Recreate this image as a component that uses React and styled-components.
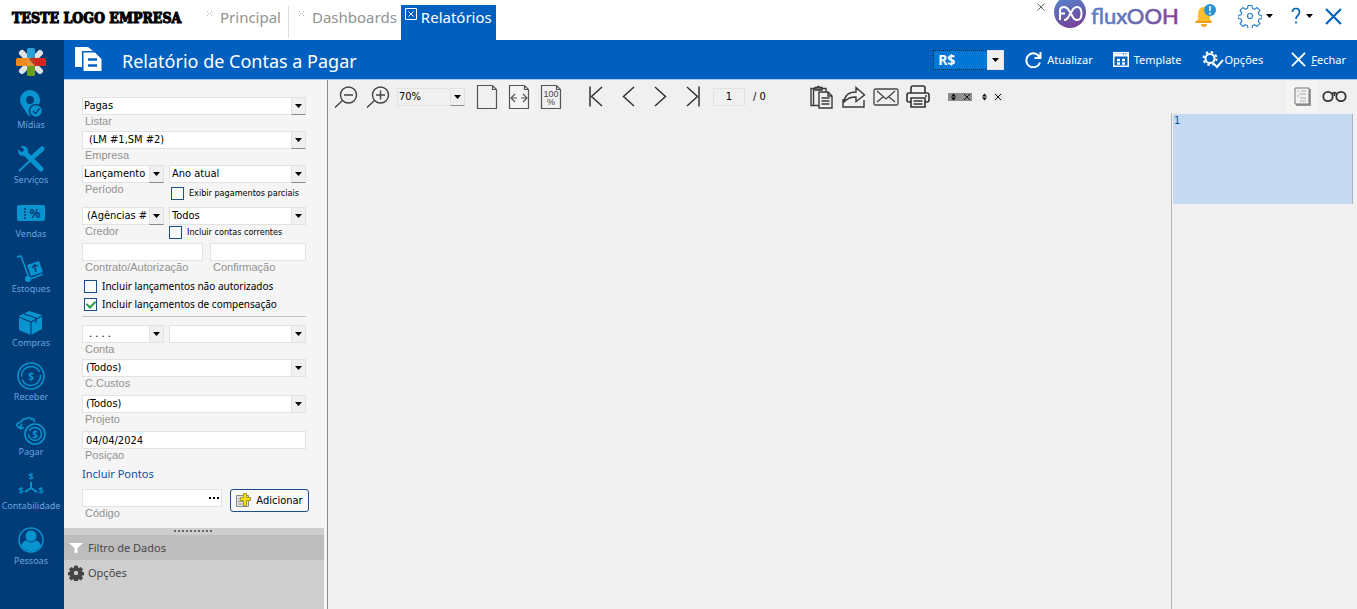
import React, { useState } from 'react';
import styled, { createGlobalStyle } from 'styled-components';

const GlobalStyle = createGlobalStyle`
    * {
        box-sizing: border-box;
    }
    body {
        margin: 0;
        background-color: #fff;
        font-family: 'Noto Sans', 'Open Sans', sans-serif;
    }
    button, input, select {
        font-family: inherit;
    }
    svg {
        display: block;
        flex-shrink: 0;
    }
`;

const formFont = "'DejaVu Sans Condensed', 'DejaVu Sans', Tahoma, sans-serif";

const Page = styled.div`
    min-height: 100vh;
    display: flex;
    flex-direction: column;
`;

const TopBar = styled.header`
    height: 40px;
    display: flex;
    align-items: stretch;
    justify-content: space-between;
    padding: 0 6px 0 12px;
`;

const Company = styled.div`
    width: 185px;
    padding-top: 8px;
    color: #000;
    font-family: 'DejaVu Serif Condensed', 'DejaVu Serif', serif;
    font-weight: 900;
    font-size: 14px;
    line-height: 20px;
    white-space: nowrap;
    -webkit-text-stroke: 1px #000;
`;

const Tabs = styled.nav`
    display: flex;
    align-items: stretch;
`;

const Tab = styled.button`
    display: flex;
    align-items: flex-start;
    gap: ${(props) => (props.$active ? 4 : 7)}px;
    margin: ${(props) => (props.$active ? '5px 0 0' : '6px 0 2px')};
    padding: ${(props) => (props.$active ? '3px 4px' : props.$divider ? '2px 7px 0 10px' : '2px 4px 0 10px')};
    border: 0;
    border-right: ${(props) => (props.$divider ? '1px solid #ddd' : '0')};
    background-color: ${(props) => (props.$active ? '#0060c0' : 'transparent')};
    color: ${(props) => (props.$active ? '#fff' : '#929292')};
    font-size: 15px;
    line-height: 19px;
    cursor: pointer;
`;

const TopTools = styled.div`
    display: flex;
    align-items: flex-start;
`;

const IconButton = styled.button`
    display: flex;
    align-items: center;
    justify-content: center;
    gap: 4px;
    height: ${(props) => props.$height || 32}px;
    width: ${(props) => (props.$width ? `${props.$width}px` : 'auto')};
    padding: 0;
    border: 0;
    background: ${(props) => props.$background || 'transparent'};
    color: ${(props) => props.$color || '#444'};
    cursor: pointer;
`;

const Body = styled.div`
    flex: 1;
    display: flex;
`;

const SideNav = styled.nav`
    width: 64px;
    flex-shrink: 0;
    display: flex;
    flex-direction: column;
    align-items: stretch;
    padding-bottom: 36px;
    background-color: #003c78;
`;

const NavLogo = styled.div`
    height: 43px;
    padding: 8px 0 0 16px;
`;

const NavItem = styled.a`
    flex: 1;
    min-height: 54px;
    display: flex;
    flex-direction: column;
    align-items: center;
    justify-content: center;
    padding-right: 2px;
    color: #6ba3e0;
    font-size: 9px;
    line-height: 12px;
    text-decoration: none;
`;

const Content = styled.div`
    flex: 1;
    min-width: 0;
    display: flex;
    flex-direction: column;
`;

const TitleBar = styled.div`
    height: 40px;
    display: flex;
    align-items: center;
    justify-content: space-between;
    padding: 0 11px;
    background-color: #0060c0;
    border-bottom: 1px solid #a5cdf2;
    color: #fff;
`;

const TitleGroup = styled.div`
    display: flex;
    align-items: center;
    gap: 19px;
`;

const Title = styled.h1`
    margin: 0;
    padding-top: 2px;
    font-size: 18px;
    font-weight: normal;
    line-height: 24px;
`;

const Actions = styled.div`
    display: flex;
    align-items: center;
`;

const Action = styled.button`
    display: flex;
    align-items: center;
    gap: ${(props) => (props.$tight ? 1 : 5)}px;
    margin-left: ${(props) => props.$space || 20}px;
    padding: 0;
    border: 0;
    background: transparent;
    color: #fff;
    font-size: 11px;
    line-height: 16px;
    cursor: pointer;
`;

const Work = styled.div`
    flex: 1;
    display: flex;
`;

const Sidebar = styled.aside`
    width: 264px;
    flex-shrink: 0;
    display: flex;
    flex-direction: column;
    padding-right: 3px;
    background-color: #f5f5f5;
    border-right: 1px solid #8c8c8c;
`;

const Filters = styled.form`
    display: flex;
    flex-direction: column;
    padding: 17px 18px 5px 18px;
`;

const Row = styled.div`
    display: grid;
    grid-template-columns: ${(props) => props.$columns || '1fr'};
    column-gap: ${(props) => props.$gap || 5}px;
    margin-bottom: ${(props) => props.$after || 0}px;
`;

const Field = styled.div`
    min-width: 0;
    display: flex;
    flex-direction: column;
`;

const Label = styled.label`
    padding-left: 3px;
    height: 16px;
    color: #929292;
    font-family: 'Liberation Sans', Arial, sans-serif;
    font-size: 11px;
    line-height: 13px;
    white-space: nowrap;
`;

const SelectBox = styled.div`
    position: relative;
    height: ${(props) => props.$height || 18}px;
    width: ${(props) => (props.$width ? `${props.$width}px` : '100%')};
`;

const Select = styled.select`
    appearance: none;
    display: block;
    width: 100%;
    height: 100%;
    padding: 0 14px 0 ${(props) => props.$indent || 1}px;
    border: 1px ${(props) => (props.$currency ? 'dotted #222' : 'solid #e2e2e2')};
    border-radius: 0;
    outline: none;
    background-color: ${(props) => (props.$currency ? '#0078d7' : props.$flat ? '#f0f0f0' : '#fff')};
    color: ${(props) => (props.$currency ? '#fff' : '#000')};
    font-family: ${(props) => (props.$currency ? "'Noto Sans', sans-serif" : formFont)};
    font-size: ${(props) => (props.$currency ? 14 : 11)}px;
    font-weight: ${(props) => (props.$currency ? 'bold' : 'normal')};
    line-height: 16px;
`;

const Arrow = styled.span`
    position: absolute;
    top: 0;
    right: 0;
    width: ${(props) => (props.$wide ? 17 : 15)}px;
    height: 100%;
    display: flex;
    align-items: center;
    justify-content: center;
    background-color: #f0f0f0;
    border: 1px solid #e2e2e2;
    border-bottom-color: ${(props) => (props.$raised ? '#8a8a8a' : '#e2e2e2')};
    pointer-events: none;
`;

const Input = styled.input`
    display: block;
    width: ${(props) => (props.$width ? `${props.$width}px` : '100%')};
    height: 18px;
    padding: 0 3px;
    border: 1px solid #e2e2e2;
    outline: none;
    background-color: ${(props) => (props.$flat ? '#f0f0f0' : '#fff')};
    color: #000;
    font-family: ${formFont};
    font-size: 11px;
    text-align: ${(props) => props.$align || 'left'};
`;

const CheckLabel = styled.label`
    display: flex;
    align-items: center;
    gap: 5px;
    height: ${(props) => props.$height || 18}px;
    padding-left: ${(props) => (props.$flush ? 0 : 2)}px;
    color: #000;
    font-family: ${(props) => (props.$small ? formFont : 'inherit')};
    font-size: ${(props) => (props.$small ? 9 : 10)}px;
    line-height: 14px;
    white-space: nowrap;
`;

const Checkbox = styled.input`
    appearance: none;
    display: flex;
    align-items: center;
    justify-content: center;
    flex-shrink: 0;
    width: 13px;
    height: 13px;
    margin: 0;
    border: 1px solid #1c4f87;
    background-color: #fafafa;
    &:checked::after {
        content: '';
        width: 4px;
        height: 7px;
        margin-bottom: 2px;
        border: solid #23a045;
        border-width: 0 2px 2px 0;
        transform: rotate(45deg);
    }
`;

const Divider = styled.hr`
    width: 100%;
    margin: 3px 0 8px;
    border: 0;
    border-top: 1px solid #c2c2c2;
`;

const PointsLink = styled.a`
    height: 24px;
    color: #0b4f9e;
    font-size: 11px;
    line-height: 18px;
    text-decoration: none;
`;

const CodeBox = styled.div`
    display: flex;
    height: 18px;
    background-color: #fff;
    border: 1px solid #e2e2e2;
`;

const CodeInput = styled.input`
    flex: 1;
    min-width: 0;
    padding: 0 3px;
    border: 0;
    outline: none;
    font-size: 10px;
`;

const AddButton = styled.button`
    height: 23px;
    display: flex;
    align-items: center;
    justify-content: center;
    gap: 4px;
    margin-right: -3px;
    padding: 0;
    border: 1px solid #1c4f87;
    border-radius: 3px;
    background-color: #f8f8f8;
    color: #000;
    font-family: ${formFont};
    font-size: 11px;
    white-space: nowrap;
`;

const Drawer = styled.div`
    flex: 1;
    display: flex;
    flex-direction: column;
    background-color: #cecece;
`;

const Grip = styled.div`
    height: 7px;
    display: flex;
    justify-content: center;
    padding-top: 2px;
`;

const DrawerItem = styled.button`
    display: flex;
    align-items: center;
    gap: 4px;
    height: 25px;
    padding: 0 4px;
    border: 0;
    background-color: ${(props) => (props.$active ? '#bdbdbd' : 'transparent')};
    color: #484848;
    font-size: 11px;
    text-align: left;
`;

const Report = styled.main`
    flex: 1;
    min-width: 0;
    display: flex;
    flex-direction: column;
    background-color: #f0f0f0;
`;

const Toolbar = styled.div`
    height: 33px;
    display: flex;
    align-items: center;
    justify-content: space-between;
    padding: 0 7px 0 2px;
`;

const ToolGroup = styled.div`
    display: flex;
    align-items: center;
    margin-left: ${(props) => props.$space || 0}px;
`;

const PageCount = styled.span`
    padding-left: 8px;
    color: #000;
    font-family: ${formFont};
    font-size: 11px;
`;

const ReportBody = styled.div`
    flex: 1;
    display: flex;
    justify-content: flex-end;
`;

const Thumbs = styled.div`
    width: 186px;
    padding: 1px 4px 0 1px;
    border-left: 1px solid #b5b5b5;
`;

const Thumb = styled.button`
    display: flex;
    align-items: flex-start;
    width: 100%;
    height: 90px;
    padding: 0 1px;
    border: 0;
    border-right: 1px solid #a8b4c4;
    background-color: #c5daf2;
    color: #0b4f9e;
    font-family: ${formFont};
    font-size: 11px;
    line-height: 14px;
`;

const Caret = ({ color = '#000' }) => (
    <svg width="7" height="4" viewBox="0 0 7 4" fill={color}>
        <path d="M0 0H7L3.5 4Z" />
    </svg>
);

const Dots = () => (
    <svg width="6" height="9" viewBox="0 0 6 9" fill="#bbb">
        <path d="M0 3h1v1H0zM4 3h1v1H4zM1 5h1v1H1zM3 5h1v1H3zM0 7h1v1H0zM4 7h1v1H4z" />
    </svg>
);

const Cross = ({ size = 16, width = 2 }) => (
    <svg width={size} height={size} viewBox="0 0 16 16" fill="none" stroke="currentColor" strokeWidth={width}>
        <path d="M1 1L15 15M15 1L1 15" />
    </svg>
);

const StarLogo = () => (
    <svg width="30" height="28" viewBox="0 0 30 28">
        <path d="M6 5L24 23M24 5L6 23" stroke="#dfe3e8" strokeWidth="6" strokeLinecap="round" />
        <rect x="11" y="0" width="8" height="14" rx="1.500" fill="#2b9fd8" />
        <rect x="0" y="10" width="15" height="8" rx="1.500" fill="#f08a1d" />
        <rect x="14" y="10" width="16" height="8" rx="1.500" fill="#d0281e" />
        <rect x="11" y="14" width="8" height="14" rx="1.500" fill="#6a9e1c" />
        <path d="M11 9v5h4z" fill="#f08a1d" />
        <path d="M11 9l8 9h-8z" fill="#e09a3a" />
        <path d="M19 9v9l-6-7z" fill="#c03a2a" />
    </svg>
);

const FluxLogo = () => (
    <svg width="133" height="32" viewBox="0 0 133 32">
        <defs>
            <linearGradient id="flux" x1="0" x2="1">
                <stop offset="0" stopColor="#5b83cc" />
                <stop offset="0.600" stopColor="#6a68ae" />
                <stop offset="1" stopColor="#8a3c94" />
            </linearGradient>
            <linearGradient id="disc" x1="0" y1="0" x2="0.300" y2="1">
                <stop offset="0" stopColor="#5189cf" />
                <stop offset="1" stopColor="#74479c" />
            </linearGradient>
        </defs>
        <circle cx="16" cy="12" r="16" fill="url(#disc)" />
        <g fill="none" stroke="#fff" strokeWidth="2">
            <path d="M6 20V11q0-4 4-4 3 0 5 3.500l3 5q2 4.500 5 4.500 4.500 0 4.500-6.500T23 7q-3 0-5 4l-3 5q-2 4-5 4M6 13.500h5" />
        </g>
        <text x="37" y="24" fill="url(#flux)" stroke="url(#flux)" strokeWidth="0.600" fontFamily="Lato, sans-serif" fontSize="22">
            fluxOOH
        </text>
    </svg>
);

const Bell = () => (
    <svg width="22" height="24" viewBox="0 0 22 24">
        <path d="M9 3q-5 1-5 7v5l-3 4h17l-2-4v-5q0-6-5-7z" fill="#fdbf2d" />
        <path d="M1 19h17l-1-2H2z" fill="#ee9c1d" />
        <path d="M7 20h6q0 3-3 3t-3-3z" fill="#f5a623" />
        <circle cx="16" cy="6" r="6" fill="#2a94d0" />
        <path d="M16 2v5M16 8.500v2" stroke="#fff" strokeWidth="1.500" />
    </svg>
);

const GearShape = ({ size = 22, stroke, fill = 'none', hole = 'none', width = 1.5, holeSize = 3 }) => (
    <svg width={size} height={size} viewBox="0 0 24 24" fill={fill} stroke={stroke} strokeWidth={width} strokeLinejoin="round">
        <path d="M10 1.500h4l.6 3 2 .8 2.500-1.700 2.800 2.800-1.700 2.500.8 2 3 .6v3l-3 .6-.8 2 1.700 2.500-2.800 2.800-2.500-1.700-2 .8-.6 3h-4l-.6-3-2-.8-2.500 1.700-2.800-2.800 1.700-2.500-.8-2-3-.6v-3l3-.6.8-2-1.700-2.500 2.800-2.800 2.500 1.700 2-.8z" />
        <circle cx="12" cy="12" r={holeSize} fill={hole} />
    </svg>
);

const ReportIcon = () => (
    <svg width="28" height="26" viewBox="0 0 28 26">
        <path d="M0 0H13L18 4H7V20H0Z" fill="#fff" />
        <path d="M8 5H20L27 12V24.500H8Z" fill="#fff" stroke="#0060c0" strokeWidth="1" />
        <path d="M13 12.500h9M13 18.500h9" stroke="#0060c0" strokeWidth="2.500" />
    </svg>
);

const RefreshIcon = () => (
    <svg width="17" height="16" viewBox="0 0 17 16" fill="none" stroke="#fff" strokeWidth="2">
        <path d="M14.500 5A7 7 0 1 0 15 10.500M15.500 0v6h-6" />
    </svg>
);

const TemplateIcon = () => (
    <svg width="16" height="15" viewBox="0 0 16 15" fill="none" stroke="#fff">
        <path d="M.75.75h14.500v13.500H.75z" strokeWidth="1.500" />
        <path d="M1 3h14" strokeWidth="3" />
        <path d="M10 2h1M12.500 2h1" stroke="#0060c0" />
        <path d="M4 8h3M4 11.500h3M9 8h3M9 11.500h3" strokeWidth="2.500" />
    </svg>
);

const OptionsIcon = () => (
    <svg width="22" height="18" viewBox="0 0 22 18" fill="none" stroke="#fff">
        <circle cx="8" cy="7.500" r="4.500" strokeWidth="2" />
        <circle cx="8" cy="7.500" r="6.500" strokeWidth="2" strokeDasharray="2.500 2.600" />
        <path d="M12 13l3 3 6-7" strokeWidth="2" />
    </svg>
);

const ZoomIcon = ({ plus }) => (
    <svg width="24" height="22" viewBox="0 0 24 22" fill="none" stroke="#444" strokeWidth="1.400">
        <circle cx="14.500" cy="9" r="8" />
        <path d="M8.500 14.500L1 21.500M10 9h9" />
        {plus && <path d="M14.500 4.500v9" />}
    </svg>
);

const SheetIcon = ({ children }) => (
    <svg width="22" height="26" viewBox="0 0 22 26" fill="none" stroke="#555" strokeWidth="1.200">
        <path d="M1.500 1.500h15l4 4v19h-19zM16.500 1.500v4h4" />
        {children}
    </svg>
);

const Chevron = ({ flip, bar }) => (
    <svg width="17" height="21" viewBox="0 0 17 21" fill="none" stroke="#333" strokeWidth="1.500">
        {flip ? <path d="M3 1l10.500 9.500L3 20" /> : <path d="M14 1L3.500 10.500 14 20" />}
        {bar && <path d={flip ? 'M15 .5v20' : 'M2 .5v20'} />}
    </svg>
);

const PasteIcon = () => (
    <svg width="24" height="24" viewBox="0 0 24 24" fill="#f0f0f0" stroke="#3a3a3a" strokeWidth="1.400">
        <path d="M1 3.500h15v17H1z" />
        <path d="M3.500 4v16" />
        <path d="M5 5V2.500h2q1-2 3 0h2V5z" fill="#777" />
        <path d="M9 7h9l4 4v12H9zM18 7v4h4" />
        <path d="M11.500 13h8M11.500 16h8M11.500 19h8" />
    </svg>
);

const ShareIcon = () => (
    <svg width="24" height="22" viewBox="0 0 24 22" fill="none" stroke="#3a3a3a" strokeWidth="1.400">
        <path d="M1 13v8h21v-7M2 16q1-10 12-10V1.500L22.500 9 14 15.500V11Q6 11 2 16z" />
    </svg>
);

const MailIcon = () => (
    <svg width="26" height="18" viewBox="0 0 26 18" fill="none" stroke="#444" strokeWidth="1.300">
        <rect x="1" y="1" width="24" height="16" rx="1.500" />
        <path d="M4 3l9 8 9-8M4 14l6-5M22 14l-6-5" />
    </svg>
);

const PrintIcon = () => (
    <svg width="24" height="23" viewBox="0 0 24 23" fill="none" stroke="#333" strokeWidth="1.600">
        <path d="M5 8V3q0-2 2-2h10q2 0 2 2v5M5 17H3q-2 0-2-2v-5q0-2 2-2h18q2 0 2 2v5q0 2-2 2h-2" />
        <path d="M5 13h14v9H5zM7.500 16h9M7.500 19h9M19 11h2" />
    </svg>
);

const SplitClose = ({ dark }) => (
    <svg width="24" height="8" viewBox="0 0 24 8">
        {dark ? <path d="M0 0h24v8H0z" fill="#8f8f8f" /> : <path d="M14 0h10v8H14z" fill="#e4e4e4" />}
        <path d="M3 3.500L5.500.5 8 3.500zM3 4.500h5L5.500 7.500z" />
        <path d="M16 1l6 6M22 1l-6 6" stroke="#111" />
    </svg>
);

const OutlineIcon = () => (
    <svg width="17" height="20" viewBox="0 0 17 20" fill="none">
        <path d="M2 2h15v17H2z" fill="#999" />
        <path d="M1 1h14v16H1z" fill="#f2f2f2" stroke="#777" />
        <path d="M3 4h2M7 4h5M5 7h7M3 9h2M6 11h6M6 14h6" stroke="#aaa" />
    </svg>
);

const GlassesIcon = () => (
    <svg width="25" height="13" viewBox="0 0 25 13" fill="none" stroke="#333" strokeWidth="1.800">
        <circle cx="6" cy="6.500" r="4.700" />
        <circle cx="19" cy="6.500" r="4.700" />
        <path d="M10 4q2.500-3 5 0M12.500 2v4" strokeWidth="1.500" />
    </svg>
);

const AddIcon = () => (
    <svg width="16" height="15" viewBox="0 0 16 15">
        <path d="M.5 2.500h12v11H.5z" fill="#e3e3e3" stroke="#888" />
        <path d="M2 6h5M2 8.500h5M2 11h7" stroke="#999" />
        <path d="M7.500.5h3v4h4v3h-4v5h-3v-5h-3v-3h3z" fill="#f7e21b" stroke="#a39a18" />
    </svg>
);

const blue = '#0895cf';
const navy = '#003c78';

const Coin = ({ x, y, r }) => (
    <g fill="none" stroke={blue}>
        <circle cx={x} cy={y} r={r} strokeWidth="1.600" />
        <circle cx={x} cy={y} r={r - 3.5} strokeWidth="1.400" strokeDasharray={`${r * 2} 3`} />
        <text x={x} y={y + 4} fill={blue} stroke="none" fontSize="10" fontWeight="bold" textAnchor="middle">$</text>
    </g>
);

const modules = [
    {
        name: 'Mídias',
        icon: (
            <>
                <path d="M14 1a10 10 0 0 1 10 10c0 3-1 4-2 6l-6 9q-2 2-4 0L6 17c-1-2-2-3-2-6A10 10 0 0 1 14 1z" fill={blue} />
                <circle cx="14" cy="11" r="4" fill={navy} />
                <circle cx="20" cy="22" r="6.500" fill={blue} stroke={navy} strokeWidth="1.500" />
                <path d="M17 22l2.500 2.500 4-5" fill="none" stroke={navy} strokeWidth="1.500" />
            </>
        )
    },
    {
        name: 'Serviços',
        icon: (
            <>
                <path d="M9 9L25 25" stroke={blue} strokeWidth="5" strokeLinecap="round" />
                <circle cx="7" cy="7" r="5" fill={blue} />
                <path d="M1 2l6 5" stroke={navy} strokeWidth="4" />
                <path d="M3 27L17 14" stroke={blue} strokeWidth="2" />
                <path d="M17 13L26 5" stroke={navy} strokeWidth="7" />
                <path d="M17 13L26 5" stroke={blue} strokeWidth="5" strokeLinecap="round" />
            </>
        )
    },
    {
        name: 'Vendas',
        icon: (
            <>
                <rect x="1" y="7" width="28" height="16" rx="2" fill={blue} />
                <path d="M9 10v11" stroke={navy} strokeWidth="1.500" strokeDasharray="2 1" />
                <text x="19" y="20" fontSize="12" fontWeight="bold" textAnchor="middle" fill={navy}>%</text>
            </>
        )
    },
    {
        name: 'Estoques',
        icon: (
            <>
                <path d="M1 4l4-1 8 22M14 26l13-5" fill="none" stroke={blue} strokeWidth="1.500" />
                <circle cx="12" cy="26" r="3" fill={blue} />
                <path d="M11 12l12-4 4 11-12 4z" fill={blue} />
                <path d="M20 19l-1.500-6M16 15l2.500-3 3.500 1" fill="none" stroke={navy} strokeWidth="1.500" />
            </>
        )
    },
    {
        name: 'Compras',
        icon: (
            <>
                <path d="M3 9l10-5 13 4v14l-11 6-12-5z" fill={blue} />
                <path d="M3 10l12 5 11-6M15 15v13M8 7l12 4v5" fill="none" stroke={navy} strokeWidth="1.200" />
            </>
        )
    },
    { name: 'Receber', icon: <Coin x={15} y={15} r={13} /> },
    {
        name: 'Pagar',
        icon: (
            <>
                <path d="M6 13q-6-2-5-5l5-3q1-3 4-2 3-3 5 0 4-1 3 3M6 8l-2 3 4 1" fill="none" stroke={blue} strokeWidth="1.600" />
                <Coin x={19} y={18} r={10} />
            </>
        )
    },
    {
        name: 'Contabilidade',
        icon: (
            <>
                <path d="M15 12v6l-6 4M15 18l6 4" fill="none" stroke={blue} strokeWidth="2" />
                <g fill={blue} fontSize="9" fontWeight="bold" textAnchor="middle">
                    <text x="15" y="10">$</text>
                    <text x="5" y="24">$</text>
                    <text x="25" y="24">$</text>
                </g>
            </>
        )
    },
    {
        name: 'Pessoas',
        icon: (
            <>
                <circle cx="15" cy="15" r="12" fill="none" stroke={blue} strokeWidth="1.500" />
                <path d="M5 21q2-6 7-6h6q5 0 7 6-4 5-10 5T5 21z" fill={blue} />
                <circle cx="15" cy="11" r="6" fill={blue} stroke={navy} />
            </>
        )
    }
];

const Dropdown = ({ id, label, value, indent, raised, flat, currency, height, width }) => (
    <SelectBox $height={height} $width={width}>
        <Select id={id} aria-label={label} $indent={indent} $flat={flat} $currency={currency}>
            <option>{value}</option>
        </Select>
        <Arrow $raised={raised} $wide={currency}>
            <Caret />
        </Arrow>
    </SelectBox>
);

const Check = ({ text, height, small, flush, defaultChecked }) => (
    <CheckLabel $height={height} $small={small} $flush={flush}>
        <Checkbox type="checkbox" defaultChecked={defaultChecked} />
        {text}
    </CheckLabel>
);

const FilterForm = () => {
    const [position, setPosition] = useState('04/04/2024');

    return (
        <Filters onSubmit={(e) => e.preventDefault()}>
            <Field>
                <Dropdown id="listar" value="Pagas" raised />
                <Label htmlFor="listar">Listar</Label>
            </Field>
            <Field>
                <Dropdown id="empresa" value="(LM #1,SM #2)" indent={6} raised />
                <Label htmlFor="empresa">Empresa</Label>
            </Field>
            <Row $columns="82px 1fr" $after={4}>
                <Field>
                    <Dropdown id="periodo" value="Lançamento" raised />
                    <Label htmlFor="periodo">Período</Label>
                </Field>
                <Field>
                    <Dropdown label="Intervalo" value="Ano atual" indent={2} raised />
                    <Check text="Exibir pagamentos parciais" height={20} small />
                </Field>
            </Row>
            <Row $columns="82px 1fr" $after={2}>
                <Field>
                    <Dropdown id="credor" value="(Agências #" indent={4} raised />
                    <Label htmlFor="credor">Credor</Label>
                </Field>
                <Field>
                    <Dropdown label="Nome do credor" value="Todos" indent={2} />
                    <Check text="Incluir contas correntes" height={14} small flush />
                </Field>
            </Row>
            <Row $columns="121px 1fr" $gap={7}>
                <Field>
                    <Input id="contrato" />
                    <Label htmlFor="contrato">Contrato/Autorização</Label>
                </Field>
                <Field>
                    <Input id="confirmacao" />
                    <Label htmlFor="confirmacao">Confirmação</Label>
                </Field>
            </Row>
            <Check text="Incluir lançamentos não autorizados" />
            <Check text="Incluir lançamentos de compensação" defaultChecked />
            <Divider />
            <Row $columns="82px 1fr">
                <Field>
                    <Dropdown id="conta" value=". .  .  ." indent={6} />
                    <Label htmlFor="conta">Conta</Label>
                </Field>
                <Dropdown label="Nome da conta" value="" />
            </Row>
            <Row $after={2}>
                <Field>
                    <Dropdown id="custos" value="(Todos)" indent={3} />
                    <Label htmlFor="custos">C.Custos</Label>
                </Field>
            </Row>
            <Row $after={2}>
                <Field>
                    <Dropdown id="projeto" value="(Todos)" indent={3} />
                    <Label htmlFor="projeto">Projeto</Label>
                </Field>
            </Row>
            <Field>
                <Input id="posicao" value={position} onChange={(e) => setPosition(e.target.value)} />
                <Label htmlFor="posicao">Posiçao</Label>
            </Field>
            <PointsLink href="#pontos">Incluir Pontos</PointsLink>
            <Row $columns="140px 1fr" $gap={8}>
                <Field>
                    <CodeBox>
                        <CodeInput id="codigo" />
                        <IconButton type="button" aria-label="Buscar código" $width={15} $height={16}>
                            <svg width="10" height="2" viewBox="0 0 10 2">
                                <path d="M0 0h2v2H0zM4 0h2v2H4zM8 0h2v2H8z" />
                            </svg>
                        </IconButton>
                    </CodeBox>
                    <Label htmlFor="codigo">Código</Label>
                </Field>
                <AddButton type="button">
                    <AddIcon />
                    Adicionar
                </AddButton>
            </Row>
        </Filters>
    );
};

const ReportToolbar = () => (
    <Toolbar>
        <ToolGroup>
            <IconButton $width={32} aria-label="Diminuir zoom"><ZoomIcon /></IconButton>
            <IconButton $width={32} aria-label="Aumentar zoom"><ZoomIcon plus /></IconButton>
            <ToolGroup $space={3}>
                <Dropdown label="Zoom" value="70%" width={68} raised flat />
            </ToolGroup>
            <ToolGroup $space={6}>
                <IconButton $width={32} aria-label="Página inteira"><SheetIcon /></IconButton>
                <IconButton $width={32} $background="#f4f4f2" aria-label="Largura da página">
                    <SheetIcon>
                        <path d="M7 10l-4 4 4 4M15 10l4 4-4 4M4 14h5M13 14h5" />
                    </SheetIcon>
                </IconButton>
                <IconButton $width={32} aria-label="Tamanho real">
                    <SheetIcon>
                        <g fill="#444" stroke="none" fontSize="9" fontFamily="Liberation Sans" textAnchor="middle">
                            <text x="11" y="13">100</text>
                            <text x="11" y="21">%</text>
                        </g>
                    </SheetIcon>
                </IconButton>
            </ToolGroup>
            <ToolGroup $space={13}>
                <IconButton $width={32} aria-label="Primeira página"><Chevron bar /></IconButton>
                <IconButton $width={32} aria-label="Página anterior"><Chevron /></IconButton>
                <IconButton $width={32} aria-label="Próxima página"><Chevron flip /></IconButton>
                <IconButton $width={32} aria-label="Última página"><Chevron flip bar /></IconButton>
            </ToolGroup>
            <ToolGroup $space={5}>
                <Input aria-label="Página" defaultValue="1" $width={32} $flat $align="center" />
                <PageCount>/ 0</PageCount>
            </ToolGroup>
            <ToolGroup $space={40}>
                <IconButton $width={32} aria-label="Copiar"><PasteIcon /></IconButton>
                <IconButton $width={32} aria-label="Exportar"><ShareIcon /></IconButton>
                <IconButton $width={32} aria-label="Enviar por e-mail"><MailIcon /></IconButton>
                <IconButton $width={32} aria-label="Imprimir"><PrintIcon /></IconButton>
            </ToolGroup>
            <ToolGroup $space={14}>
                <IconButton $width={24} aria-label="Fechar grupo"><SplitClose dark /></IconButton>
                <IconButton $width={38} aria-label="Fechar seção"><SplitClose /></IconButton>
            </ToolGroup>
        </ToolGroup>
        <ToolGroup>
            <IconButton $width={32} $background="#f4f4f2" aria-label="Miniaturas"><OutlineIcon /></IconButton>
            <IconButton $width={32} aria-label="Localizar"><GlassesIcon /></IconButton>
        </ToolGroup>
    </Toolbar>
);

const App = () => (
    <Page>
        <GlobalStyle />
        <TopBar>
            <Tabs>
                <Company>TESTE LOGO EMPRESA</Company>
                <Tab $divider>
                    <Dots />
                    Principal
                </Tab>
                <Tab>
                    <Dots />
                    Dashboards
                </Tab>
                <Tab $active>
                    <svg width="12" height="12" viewBox="0 0 12 12" fill="none" stroke="#fff">
                        <path d="M.5.5h11v11H.5zM3.500 3.500l5 5M8.500 3.500l-5 5" />
                    </svg>
                    Relatórios
                </Tab>
            </Tabs>
            <TopTools>
                <IconButton $width={26} $height={14} $color="#666" aria-label="Fechar aba"><Cross size={8} width={2} /></IconButton>
                <FluxLogo />
                <IconButton $width={36} aria-label="Notificações"><Bell /></IconButton>
                <IconButton $width={64} aria-label="Configurações">
                    <GearShape size={24} stroke="#2a7fd4" width={1.2} holeSize={2.5} />
                    <Caret />
                </IconButton>
                <IconButton $width={28} $color="#0060c0" aria-label="Ajuda">
                    <svg width="12" height="18" viewBox="0 0 12 18" fill="none" stroke="currentColor" strokeWidth="1.700">
                        <path d="M2.500 5q0-3.500 3.500-3.500T9.500 5q0 2-1.750 3.500T6 12M6 14.500v2" />
                    </svg>
                    <Caret />
                </IconButton>
                <IconButton $width={36} $color="#0060c0" aria-label="Sair"><Cross size={17} /></IconButton>
            </TopTools>
        </TopBar>
        <Body>
            <SideNav>
                <NavLogo>
                    <StarLogo />
                </NavLogo>
                {modules.map((item) => (
                    <NavItem key={item.name} href={`#${item.name}`}>
                        <svg width="30" height="30" viewBox="0 0 30 30">{item.icon}</svg>
                        {item.name}
                    </NavItem>
                ))}
            </SideNav>
            <Content>
                <TitleBar>
                    <TitleGroup>
                        <ReportIcon />
                        <Title>Relatório de Contas a Pagar</Title>
                    </TitleGroup>
                    <Actions>
                        <Dropdown label="Moeda" value="R$" indent={4} height={20} width={71} currency />
                        <Action $space={21}>
                            <RefreshIcon />
                            Atualizar
                        </Action>
                        <Action>
                            <TemplateIcon />
                            Template
                        </Action>
                        <Action $tight>
                            <OptionsIcon />
                            Opções
                        </Action>
                        <Action $space={28}>
                            <Cross size={15} />
                            <span><u>F</u>echar</span>
                        </Action>
                    </Actions>
                </TitleBar>
                <Work>
                    <Sidebar>
                        <FilterForm />
                        <Drawer>
                            <Grip>
                                <svg width="40" height="3" viewBox="0 0 40 3" stroke="#666" strokeWidth="2" strokeDasharray="2 2">
                                    <path d="M0 1h40" />
                                </svg>
                            </Grip>
                            <DrawerItem $active>
                                <svg width="16" height="12" viewBox="0 0 16 12" fill="#fff">
                                    <path d="M1 1h14L9.500 6v5h-3V6z" />
                                </svg>
                                Filtro de Dados
                            </DrawerItem>
                            <DrawerItem>
                                <GearShape size={16} fill="#444" stroke="#444" hole="#cecece" holeSize={4} />
                                Opções
                            </DrawerItem>
                        </Drawer>
                    </Sidebar>
                    <Report>
                        <ReportToolbar />
                        <ReportBody>
                            <Thumbs>
                                <Thumb>1</Thumb>
                            </Thumbs>
                        </ReportBody>
                    </Report>
                </Work>
            </Content>
        </Body>
    </Page>
);

export default App;
